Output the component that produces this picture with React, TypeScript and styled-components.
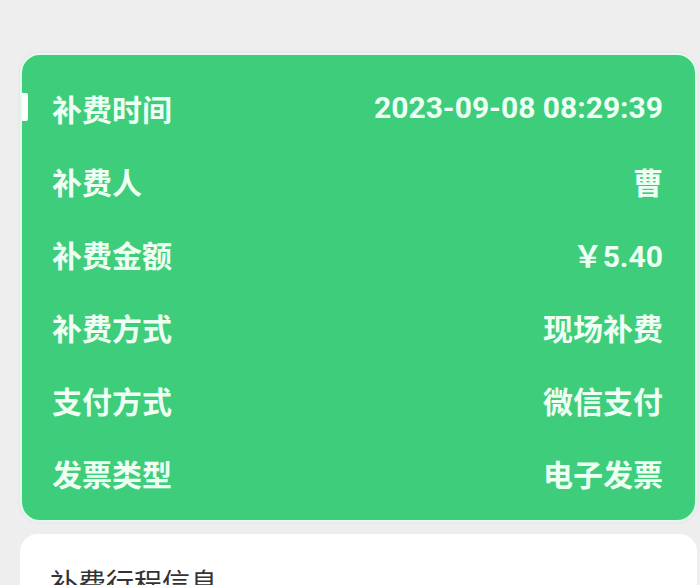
import React from "react";
import styled, { createGlobalStyle } from "styled-components";

const Global = createGlobalStyle`
  html, body { margin: 0; padding: 0; background: #eeeeee; }
  body { font-family: Roboto, "Noto Sans CJK SC", "Noto Sans", sans-serif; }
`;

const Page = styled.div`
  display: flex;
  flex-direction: column;
  gap: 12px;
  padding: 53px 3px 0 20px;
  height: 585px;
  box-sizing: border-box;
  overflow: hidden;
`;

const InfoCard = styled.div`
  position: relative;
  background: #3ecd7a;
  border: 2px solid #e3fbed;
  border-radius: 20px;
  padding: 16px 32px 11px 30px;
  box-shadow: 0 0 4px rgba(0, 0, 0, 0.06);
`;

const Marker = styled.span`
  position: absolute;
  left: 0;
  top: 38px;
  width: 6px;
  height: 28px;
  background: #ffffff;
  border-radius: 0 2px 2px 0;
`;

const Row = styled.div`
  display: flex;
  align-items: center;
  justify-content: space-between;
  height: 73px;
  color: #eefff4;
`;

const Label = styled.span`
  font-family: "Noto Sans CJK SC", sans-serif;
  font-size: 30px;
  font-weight: 700;
`;

const Value = styled.span<{ $num?: boolean }>`
  font-family: ${(p) => (p.$num ? 'Roboto, "Noto Sans CJK SC"' : '"Noto Sans CJK SC"')}, sans-serif;
  font-size: 30px;
  font-weight: 700;
`;

const TripCard = styled.div`
  background: #ffffff;
  border-radius: 18px;
  padding: 28px 30px;
  min-height: 80px;
`;

const TripTitle = styled.div`
  font-family: "Noto Sans CJK SC", sans-serif;
  font-size: 28px;
  color: #333333;
`;

const rows: { label: string; value: string; num?: boolean }[] = [
  { label: "补费时间", value: "2023-09-08 08:29:39", num: true },
  { label: "补费人", value: "曹" },
  { label: "补费金额", value: "￥5.40", num: true },
  { label: "补费方式", value: "现场补费" },
  { label: "支付方式", value: "微信支付" },
  { label: "发票类型", value: "电子发票" },
];

export default function App() {
  return (
    <>
      <Global />
      <Page>
        <InfoCard>
          <Marker />
          {rows.map((r) => (
            <Row key={r.label}>
              <Label>{r.label}</Label>
              <Value $num={r.num}>{r.value}</Value>
            </Row>
          ))}
        </InfoCard>
        <TripCard>
          <TripTitle>补费行程信息</TripTitle>
        </TripCard>
      </Page>
    </>
  );
}
